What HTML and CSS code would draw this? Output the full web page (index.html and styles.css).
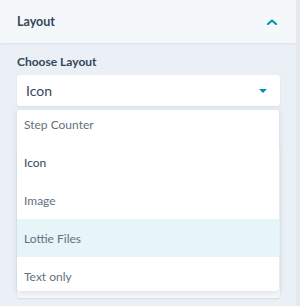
FILE: index.html
```html
<!DOCTYPE html>
<html lang="en">
<head>
    <meta charset="UTF-8">
    <title>Layout</title>
    <link rel="stylesheet" href="styles.css">
</head>
<body>
    <div class="panel">
        <div class="header">
            <span class="header-title">Layout</span>
            <svg class="chevron" width="10" height="6" viewBox="0 0 10 6">
                <path d="M1 5 L5 1.5 L9 5" fill="none" stroke="#0091ae" stroke-width="2" stroke-linecap="round" stroke-linejoin="round"/>
            </svg>
        </div>
        <div class="content">
            <div class="label">Choose Layout</div>
            <div class="field">
                <div class="select">
                    <span>Icon</span>
                    <span class="caret"></span>
                </div>
                <div class="dropdown">
                    <div class="options">
                        <div class="option">Step Counter</div>
                        <div class="option selected">Icon</div>
                        <div class="option">Image</div>
                        <div class="option hover">Lottie Files</div>
                        <div class="option">Text only</div>
                    </div>
                </div>
            </div>
            <div class="card-behind"></div>
        </div>
    </div>
</body>
</html>
```

FILE: styles.css
```css
body {
    margin: 0;
    background: #e3e9ef;
    font-family: 'Lato', 'Noto Sans', sans-serif;
    color: #33475b;
}
.panel {
    width: 296px;
    height: 306px;
    background: #eaf0f6;
    overflow: hidden;
}
.header {
    height: 43px;
    background: #f5f8fa;
    display: flex;
    align-items: center;
    justify-content: space-between;
    padding: 0 19px 0 17px;
    box-shadow: 0 1px 2px rgba(45, 62, 80, 0.08);
}
.header-title {
    font-size: 12.5px;
    font-weight: 700;
}
.chevron {
    display: block;
}
.content {
    padding: 12px 16px 0 17px;
}
.label {
    font-size: 12px;
    font-weight: 700;
    line-height: 14px;
    margin-bottom: 6px;
}
.field {
    position: relative;
}
.select {
    height: 31px;
    background: #fff;
    border-radius: 3px;
    box-shadow: 0 1px 2px rgba(45, 62, 80, 0.1);
    display: flex;
    align-items: center;
    justify-content: space-between;
    padding: 0 13px 0 9px;
    font-size: 14px;
}
.caret {
    width: 0;
    height: 0;
    border-left: 4px solid transparent;
    border-right: 4px solid transparent;
    border-top: 4px solid #0091ae;
}
.dropdown {
    position: absolute;
    top: 35px;
    left: 0;
    width: 262px;
    height: 181px;
    background: #fff;
    border-radius: 3px;
    box-shadow: 0 1px 6px rgba(45, 62, 80, 0.14);
    overflow: hidden;
    z-index: 2;
}
.options {
    margin-top: -5px;
}
.option {
    height: 38px;
    display: flex;
    align-items: center;
    padding: 0 7px;
    font-size: 12px;
    color: #63717f;
}
.option.selected {
    color: #33475b;
}
.option.hover {
    background: #e5f5f8;
}
.card-behind {
    margin-top: 41px;
    height: 151px;
    width: 263px;
    background: #f6f8fa;
    border-radius: 3px;
    box-shadow: 0 1px 2px rgba(45, 62, 80, 0.12);
}
```
